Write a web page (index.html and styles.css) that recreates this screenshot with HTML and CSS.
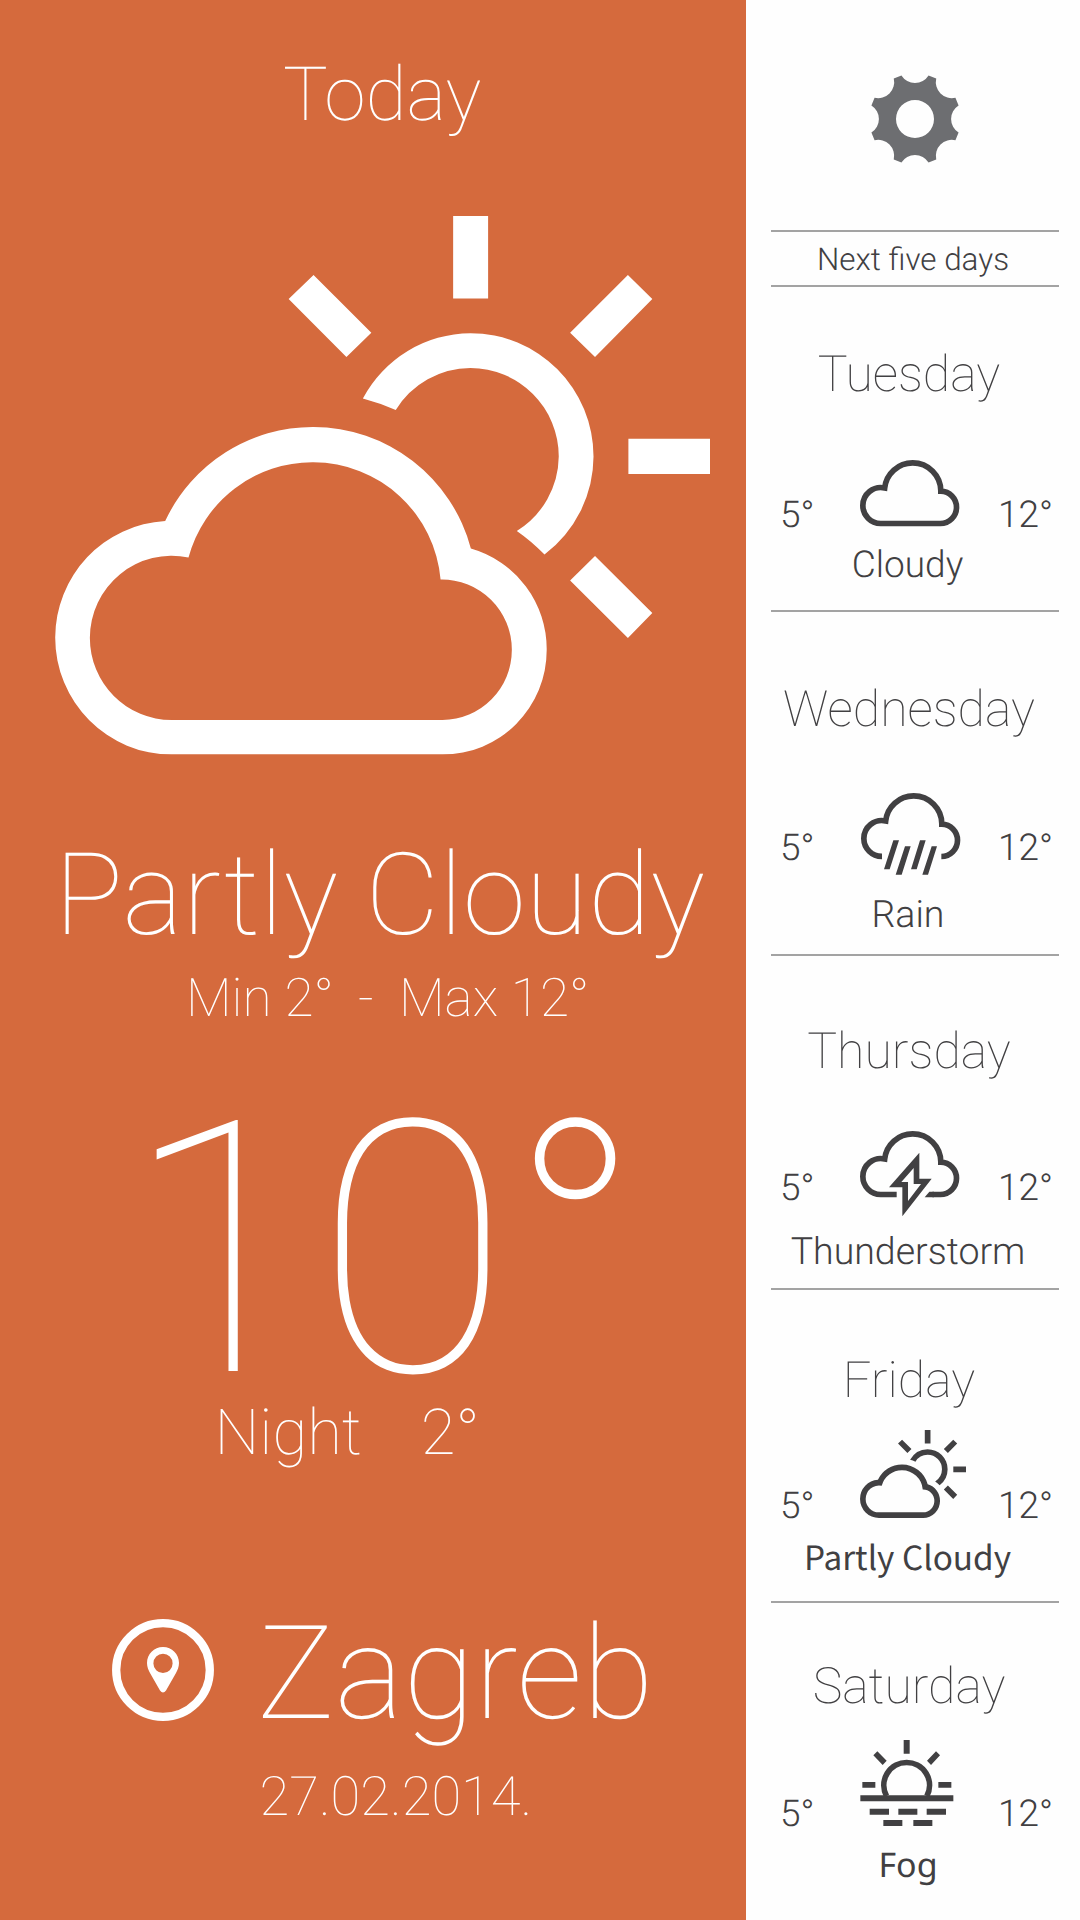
FILE: index.html
```
<!DOCTYPE html>
<html lang="en">
<head>
<meta charset="utf-8">
<title>Weather</title>
<link rel="stylesheet" href="styles.css">
</head>
<body>
<svg class="defs" aria-hidden="true">
  <symbol id="partly" viewBox="55 216 658 538.6" preserveAspectRatio="none">
    <path fill-rule="evenodd" d="M172 754.600H444A104.500 104.500 0 0 0 548.500 650A104.500 104.500 0 0 0 472.400 548.500A163.700 163.700 0 0 0 314.500 427A163.700 163.700 0 0 0 165.600 521A117 117 0 0 0 55.200 637.600A117 117 0 0 0 172 754.600ZM172 720A82 82 0 0 1 90 638A82 82 0 0 1 189 557.600A128.500 128.500 0 0 1 314.500 462.300A128.500 128.500 0 0 1 442 579.600A70 70 0 0 1 513.500 650A70 70 0 0 1 444 720Z"/>
    <path d="M364 398.500A123.500 123.500 0 0 1 472 333.200A123.500 123.500 0 0 1 595.500 456.600A123.500 123.500 0 0 1 546.300 554.600Q533 541 518.500 531A88.600 88.600 0 0 0 560.600 456.600A88.600 88.600 0 0 0 472 368A88.600 88.600 0 0 0 397 410Q381 403 364 398.500Z"/>
    <path d="M454.600 216H489.700V298.500H454.600ZM630.500 438.800H713V474H630.500ZM630 275L654.500 299L597 357L572 332.700ZM597 556L654.500 613L630 638L572 580.600ZM314.500 275L372.500 332.700L347.500 357L289.500 299Z"/>
  </symbol>
</svg>
<div class="app">
  <main class="today">
    <h1 class="today-title">Today</h1>
    <svg class="today-icon"><use href="#partly"/></svg>
    <p class="condition">Partly Cloudy</p>
    <p class="range"><span class="range-min">Min 2°</span><span class="range-dash">-</span><span>Max 12°</span></p>
    <p class="temperature">10°</p>
    <p class="night"><span class="night-label">Night</span><span>2°</span></p>
    <div class="place">
      <svg class="pin" viewBox="0 0 102 102">
        <circle cx="51" cy="51" r="46.8" fill="none" stroke="#fff" stroke-width="8.3"/>
        <path fill="#fff" fill-rule="evenodd" d="M51 28C60 28 67 35 67 44C67 48 65.5 51 64 54L54 71.500Q51 75.500 48 71.500L38 54C36.500 51 35 48 35 44C35 35 42 28 51 28ZM51 34.800A9.600 9.600 0 1 0 51 54A9.600 9.600 0 1 0 51 34.800Z"/>
      </svg>
      <div>
        <p class="city">Zagreb</p>
        <p class="date">27.02.2014.</p>
      </div>
    </div>
  </main>
  <aside class="forecast">
    <svg class="gear" viewBox="-138 -138 276 276">
      <path fill="#6d6e71" fill-rule="evenodd" d="M-40.700 -130.800A48 48 0 0 0 40.700 -130.800L63.700 -121.300A48 48 0 0 0 121.300 -63.700L130.800 -40.700A48 48 0 0 0 130.800 40.700L121.300 63.700A48 48 0 0 0 63.700 121.300L40.700 130.800A48 48 0 0 0 -40.700 130.800L-63.700 121.300A48 48 0 0 0 -121.300 63.700L-130.800 40.700A48 48 0 0 0 -130.800 -40.700L-121.300 -63.700A48 48 0 0 0 -63.700 -121.300ZM0 -57A57 57 0 1 0 0 57A57 57 0 1 0 0 -57Z"/>
    </svg>
    <h2 class="forecast-title">Next five days</h2>

    <section class="day tuesday">
      <h3 class="day-name">Tuesday</h3>
      <div class="day-row">
        <span class="low">5°</span>
        <svg class="icon" viewBox="358 121 320 264">
          <path class="line" d="M420 311.500H599A48.500 48.500 0 0 0 647.500 263A48.500 48.500 0 0 0 600.500 214.500A84.500 84.500 0 0 0 516 129.500A84.500 84.500 0 0 0 432 204.800A54 54 0 0 0 366.500 257.500A54 54 0 0 0 420 311.500Z"/>
        </svg>
        <span class="high">12°</span>
      </div>
      <p class="label">Cloudy</p>
    </section>

    <section class="day wednesday">
      <h3 class="day-name">Wednesday</h3>
      <div class="day-row">
        <span class="low">5°</span>
        <svg class="icon" viewBox="358 398 320 264">
          <path class="line" d="M424 588.300A54 54 0 0 1 369.500 534.500A54 54 0 0 1 435 481.800A84.500 84.500 0 0 1 519 406.500A84.500 84.500 0 0 1 603.500 491.500A48.500 48.500 0 0 1 650.500 540A48.500 48.500 0 0 1 602 588.500"/>
          <path d="M458 540H475L447 627H430ZM493 558H510L483 643H465ZM538 540H555L528 627H511ZM573 558H589L562 643H545Z"/>
        </svg>
        <span class="high">12°</span>
      </div>
      <p class="label">Rain</p>
    </section>

    <section class="day thursday">
      <h3 class="day-name">Thursday</h3>
      <div class="day-row">
        <span class="low">5°</span>
        <svg class="icon" viewBox="358 392 320 264">
          <path class="line" d="M468 582.500H420A54 54 0 0 1 366.500 528.500A54 54 0 0 1 432 475.800A84.500 84.500 0 0 1 516 400.500A84.500 84.500 0 0 1 600.500 485.500A48.500 48.500 0 0 1 647.500 534A48.500 48.500 0 0 1 599 582.500H575"/>
          <path d="M566 574H580V591H552Z"/>
          <path fill-rule="evenodd" d="M536 457V535H573L485 648V561H445ZM519 503L482 545H502V602L541 551H519Z"/>
        </svg>
        <span class="high">12°</span>
      </div>
      <p class="label">Thunderstorm</p>
    </section>

    <section class="day friday">
      <h3 class="day-name">Friday</h3>
      <div class="day-row">
        <span class="low">5°</span>
        <svg class="icon"><use href="#partly"/></svg>
        <span class="high">12°</span>
      </div>
      <p class="label">Partly Cloudy</p>
    </section>

    <section class="day saturday">
      <h3 class="day-name">Saturday</h3>
      <div class="day-row">
        <span class="low">5°</span>
        <svg class="icon" viewBox="359 298 320 264">
          <path class="line" d="M438.500 466A68.500 68.500 0 1 1 559.500 466"/>
          <path d="M490 298H508V339H490ZM366 424H405V441H366ZM594 424H633V441H594ZM360 464H639V482H360ZM399 344L411 332L439 360L427 373ZM599 344L587 332L560 360L572 373Z"/>
          <path d="M388 504H446V522H388ZM474 504H531V522H474ZM559 504H617V522H559ZM429 538H486V556H429ZM519 538H576V556H519Z"/>
        </svg>
        <span class="high">12°</span>
      </div>
      <p class="label">Fog</p>
    </section>
  </aside>
</div>
</body>
</html>
```
FILE: styles.css
```
* { box-sizing: border-box; margin: 0; padding: 0; }

body {
  width: 1080px;
  height: 1920px;
  overflow: hidden;
  background: #fefefe;
  font-family: Roboto, sans-serif;
  font-weight: 100;
  text-rendering: geometricPrecision;
}

h1, h2, h3 { font-weight: inherit; }
svg { display: block; flex: none; }
.defs { display: none; }

.app { display: flex; height: 1920px; }

/* Current weather */
.today {
  display: flex;
  flex-direction: column;
  width: 746.4px;
  flex: none;
  padding-top: 57.6px;
  background: #d56a3d;
  color: #fff;
  white-space: nowrap;
}

.today-title {
  margin-left: 283px;
  font-size: 75px;
  line-height: 75px;
}

.today-icon {
  width: 655.6px;
  height: 538.6px;
  margin: 83.4px 0 0 54.8px;
  fill: #fff;
}

.condition {
  margin: 83px 0 0 54.5px;
  font-size: 114.2px;
  line-height: 114.5px;
}

.range {
  display: flex;
  margin: 20px 0 0 186px;
  font-size: 53.2px;
  line-height: 53.5px;
}
.range-min { width: 172px; }
.range-dash { width: 41px; }

.temperature {
  margin: 93px 0 0 124.5px;
  font-size: 352px;
  line-height: 264px;
  letter-spacing: -0.9px;
}

.night {
  display: flex;
  margin: 19.5px 0 0 214.5px;
  font-size: 63.4px;
  line-height: 63.5px;
}
.night-label { width: 206.3px; }

.place {
  display: flex;
  gap: 43px;
  margin: 142.5px 0 0 112px;
}
.pin { width: 102px; height: 102px; margin-top: 10.5px; }
.city { padding-top: 1px; font-size: 130px; line-height: 130px; }
.date { margin: 31.5px 0 0 2.5px; font-size: 54.3px; line-height: 54.5px; }

/* Five-day forecast */
.forecast {
  flex: 1;
  padding: 73.3px 21px 0 24.6px;
  color: #414042;
}

.gear { width: 92px; height: 92px; margin: 0 auto; }

.forecast-title {
  height: 57px;
  margin-top: 64.7px;
  padding: 11.6px 4px 0 0;
  border: solid #a3a3a3;
  border-width: 2px 0;
  font-size: 31.4px;
  line-height: 31.4px;
  font-weight: 300;
  text-align: center;
}

.day { height: 325px; border-bottom: 2px solid #a3a3a3; }
.day-name {
  position: relative;
  top: 1px;
  padding-right: 12px;
  font-size: 50px;
  line-height: 50px;
  text-align: center;
}
.day-row {
  display: grid;
  grid-template-columns: 79.8px 1fr auto;
  align-items: start;
  padding: 0 6px 0 9px;
}
.low, .high, .label {
  position: relative;
  top: 1.2px;
  font-size: 37px;
  line-height: 37px;
  font-weight: 300;
}
.label { padding-right: 14px; font-size: 37.5px; text-align: center; }
.icon { width: 106.7px; height: 88px; fill: #414042; }
.line { fill: none; stroke: #414042; stroke-width: 17; }

.tuesday { padding-top: 61.9px; }
.tuesday .day-row { height: 85.2px; margin-top: 61.4px; }
.tuesday .low, .tuesday .high { padding-top: 35.2px; }
.tuesday .label { padding-right: 15px; font-size: 37px; }

.wednesday { height: 344px; padding-top: 71.9px; }
.wednesday .day-row { height: 103.2px; margin-top: 58.8px; }
.wednesday .low, .wednesday .high { padding-top: 35.8px; }

.thursday { height: 334px; padding-top: 69.9px; }
.thursday .day-row { height: 101.8px; margin-top: 54.8px; }
.thursday .low, .thursday .high { padding-top: 37.8px; }

.friday { height: 313px; padding-top: 64.9px; }
.friday .day-row { height: 107.4px; margin-top: 25.1px; }
.friday .low, .friday .high { padding-top: 56.8px; }
.friday .label { top: 0; padding-right: 15px; font: 400 33.3px/37px "Noto Sans CJK SC", sans-serif; }

.saturday { height: 317px; padding-top: 57.6px; border-bottom: 0; }
.saturday .day-row { height: 107px; margin-top: 28.4px; }
.saturday .low, .saturday .high { padding-top: 55.5px; }
.saturday .icon { margin-top: 0.6px; }
.saturday .label { top: 0; font: 400 34px/37px "Noto Sans", sans-serif; }
```
